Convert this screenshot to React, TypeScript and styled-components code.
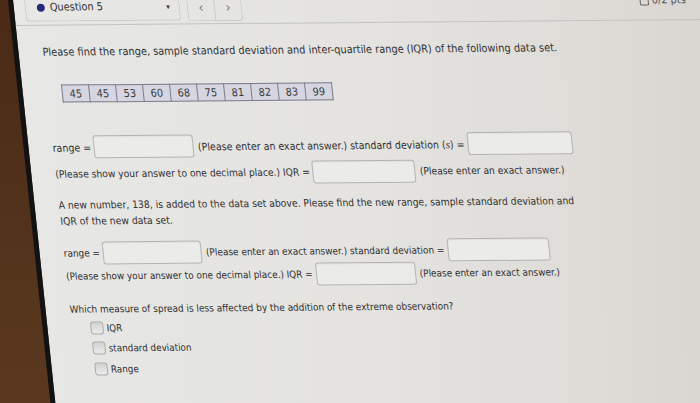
import React from "react";
import styled, { createGlobalStyle } from "styled-components";

const GlobalStyle = createGlobalStyle`
  html, body {
    margin: 0;
    padding: 0;
    width: 700px;
    height: 403px;
    overflow: hidden;
    background: #4d2e19;
  }
  body {
    font-family: "DejaVu Sans Condensed", "Open Sans", sans-serif;
  }
`;

const DATA = [45, 45, 53, 60, 68, 75, 81, 82, 83, 99];

// Laptop screen, seen at an angle on the desk
const Desk = styled.div`
  width: 700px;
  height: 403px;
  overflow: hidden;
  box-sizing: border-box;
  padding-left: 8px;
  background: linear-gradient(180deg, #4a2a16 0%, #5b3920 100%);
`;

const Screen = styled.div`
  width: 760px;
  height: 440px;
  border-left: 5px solid #121212;
  background: linear-gradient(95deg, #e7e7e5 0%, #e4e3e0 45%, #dedbd7 75%, #d3cec9 100%);
  transform-origin: 0 0;
  transform: skew(6deg, -0.5deg);
  color: #313131;
  font-size: 10.9px;
`;

const Header = styled.div`
  display: flex;
  align-items: flex-start;
  height: 25px;
  padding-left: 11px;
  border-bottom: 1px solid #c3c3c3;
`;

const QuestionPicker = styled.div`
  display: flex;
  align-items: center;
  box-sizing: border-box;
  width: 155px;
  height: 22px;
  padding: 0 9px 6px 11px;
  border: 1px solid #cacaca;
  border-top: none;
  border-radius: 0 0 4px 4px;
`;

const Dot = styled.span`
  width: 8px;
  height: 8px;
  border-radius: 50%;
  background: #262a78;
  margin-right: 5px;
`;

const Caret = styled.span`
  margin-left: auto;
  font-size: 5px;
  color: #333;
`;

const NavGroup = styled.div`
  display: flex;
  margin-left: 7px;
  height: 22px;
  border: 1px solid #cacaca;
  border-top: none;
  border-radius: 0 0 4px 4px;
`;

const NavButton = styled.span<{ $divider?: boolean }>`
  width: 26px;
  display: flex;
  justify-content: center;
  padding-top: 3px;
  font-size: 14px;
  line-height: 12px;
  color: #7d7d7d;
  border-right: ${(p) => (p.$divider ? "1px solid #cacaca" : "none")};
`;

const Points = styled.div`
  display: flex;
  align-items: center;
  gap: 3px;
  margin-left: 398px;
  line-height: 12px;
  color: #555;
`;

const PtsIcon = styled.span`
  width: 7px;
  height: 7px;
  border: 1px solid #666;
  border-radius: 1px;
`;

const Body = styled.div`
  padding-left: 24px;
`;

const Prompt = styled.p`
  margin: 20px 0 0;
  line-height: 14px;
`;

const DataTable = styled.table`
  margin: 25px 0 0 15px;
  border-collapse: collapse;
  background: #d5d6e2;
`;

const Cell = styled.td`
  width: 26px;
  height: 16px;
  padding: 0;
  text-align: center;
  border: 1px solid #7c7c88;
  color: #3a3a3a;
`;

// text sizes drift a little down the screen because of the viewing angle
const AnswerRow = styled.div<{ $top: number; $size: number }>`
  display: flex;
  align-items: center;
  height: 23px;
  margin-top: ${(p) => p.$top}px;
  font-size: ${(p) => p.$size}px;
  white-space: nowrap;
`;

const AnswerBox = styled.input<{ $w: number }>`
  width: ${(p) => p.$w}px;
  height: 23px;
  box-sizing: border-box;
  margin: 0 4px 0 3px;
  border: 1px solid #b4b4b2;
  border-radius: 3px;
  background: #ebebe9;
  box-shadow: inset 0 1px 1px rgba(0, 0, 0, 0.05);
  outline: none;
`;

const Var = styled.i`
  font-family: "Liberation Serif", serif;
  font-size: 1.08em;
`;

const Paragraph = styled.p`
  margin: 11px 0 0;
  width: 530px;
  font-size: 10.3px;
  line-height: 16px;
`;

const Question = styled.p`
  margin: 15px 0 0;
  font-size: 9.95px;
  line-height: 14px;
`;

const Choices = styled.div`
  margin: 1px 0 0 19px;
  font-size: 9.8px;
`;

const Choice = styled.label`
  display: flex;
  align-items: center;
  gap: 3px;
  height: 20.5px;
`;

const CheckBox = styled.span`
  width: 11px;
  height: 11px;
  border: 1px solid #a9a9a9;
  border-radius: 3px;
  background: linear-gradient(180deg, #d2d2d2 0%, #ececec 100%);
`;

export default function App() {
  return (
    <Desk>
      <GlobalStyle />
      <Screen>
        <Header>
          <QuestionPicker>
            <Dot />
            Question 5
            <Caret>▼</Caret>
          </QuestionPicker>
          <NavGroup>
            <NavButton $divider>‹</NavButton>
            <NavButton>›</NavButton>
          </NavGroup>
          <Points>
            <PtsIcon />
            0/2 pts
          </Points>
        </Header>

        <Body>
          <Prompt>
            Please find the range, sample standard deviation and inter-quartile range (IQR) of the
            following data set.
          </Prompt>

          <DataTable>
            <tbody>
              <tr>
                {DATA.map((v, i) => (
                  <Cell key={i}>{v}</Cell>
                ))}
              </tr>
            </tbody>
          </DataTable>

          <AnswerRow $top={33} $size={10.5}>
            range =<AnswerBox $w={100} />
            (Please enter an exact answer.) standard deviation (<Var>s</Var>) =
            <AnswerBox $w={105} />
          </AnswerRow>
          <AnswerRow $top={4} $size={10.2}>
            (Please show your answer to one decimal place.) IQR =<AnswerBox $w={103} />
            (Please enter an exact answer.)
          </AnswerRow>

          <Paragraph>
            A new number, 138, is added to the data set above. Please find the new range, sample
            standard deviation and IQR of the new data set.
          </Paragraph>

          <AnswerRow $top={13} $size={9.95}>
            range =<AnswerBox $w={99} />
            (Please enter an exact answer.) standard deviation =<AnswerBox $w={102} />
          </AnswerRow>
          <AnswerRow $top={0} $size={9.9}>
            (Please show your answer to one decimal place.) IQR =<AnswerBox $w={100} />
            (Please enter an exact answer.)
          </AnswerRow>

          <Question>
            Which measure of spread is less affected by the addition of the extreme observation?
          </Question>

          <Choices>
            <Choice>
              <CheckBox />
              IQR
            </Choice>
            <Choice>
              <CheckBox />
              standard deviation
            </Choice>
            <Choice>
              <CheckBox />
              Range
            </Choice>
          </Choices>
        </Body>
      </Screen>
    </Desk>
  );
}
